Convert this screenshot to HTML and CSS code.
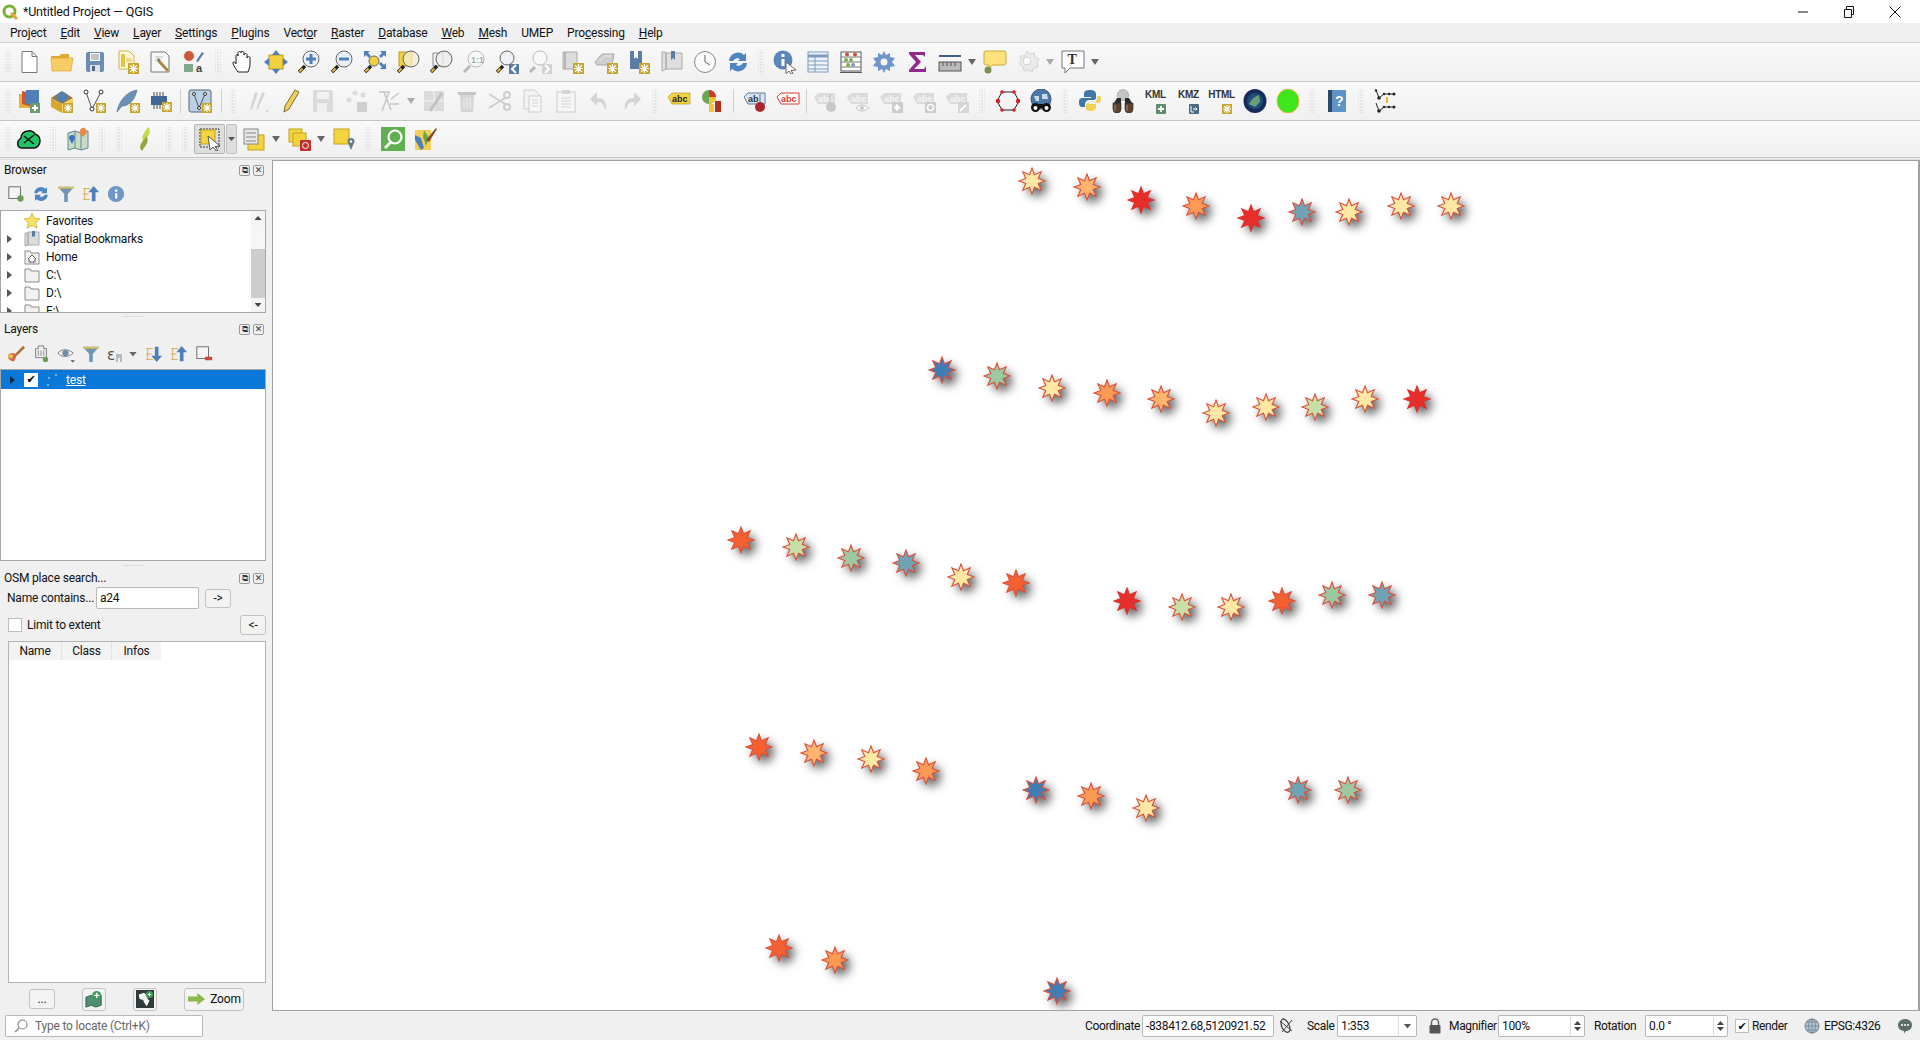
FILE: index.html
```html
<!DOCTYPE html>
<html lang="en">
<head>
    <meta charset="UTF-8">
    <title>*Untitled Project — QGIS</title>
    <link rel="stylesheet" href="styles.css">
</head>
<body>
    <svg class="defs">
        <defs>
            <symbol id="badge" viewBox="0 0 10 10"><rect width="10" height="10" fill="#c8a52e"/><path d="M5 1v8M1 5h8M2 2l6 6M8 2l-6 6" stroke="#fff" stroke-width="1.1"/></symbol>
            <symbol id="mag" viewBox="0 0 24 24"><path d="M2 22l6-6" stroke="#222" stroke-width="3.4"/><path d="M2.5 21.5l3-3" stroke="#e8c33c" stroke-width="1.8"/></symbol>
            <symbol id="fold" viewBox="0 0 16 16"><path d="M1 2h5l1 2h8v11H1z" fill="#f1f1f1" stroke="#8a8a8a"/></symbol>
            <symbol id="lab" viewBox="0 0 24 24"><path d="M1 8l4-4h17v11H5z" fill="#d9d9d9"/><text x="5" y="13" class="ict" font-size="9" font-weight="700" fill="#f5f5f5">abc</text></symbol>
            <polygon id="star" points="0,-13 2.5,-6.2 9.2,-9.2 6.2,-2.5 13,0 6.2,2.500 9.2,9.2 2.5,6.200 0,13 -2.5,6.200 -9.2,9.2 -6.2,2.500 -13,0 -6.2,-2.5 -9.2,-9.2 -2.5,-6.2"/>
        </defs>
    </svg>

    <div class="titlebar">
        <svg class="app-logo" viewBox="0 0 16 16"><circle cx="7.5" cy="7.5" r="5.5" fill="none" stroke="#7fae35" stroke-width="3"/><path d="M9 9l6 6" stroke="#e8a33a" stroke-width="3"/></svg>
        <span class="app-title">*Untitled Project — QGIS</span>
        <div class="winbtns">
            <svg class="winbtn" viewBox="0 0 12 12"><path d="M1 6h10" stroke="#111"/></svg>
            <svg class="winbtn" viewBox="0 0 12 12"><path d="M1.5 3.5h7v8h-7zM3.5 3.5v-3h7v8h-2" fill="none" stroke="#111"/></svg>
            <svg class="winbtn" viewBox="0 0 12 12"><path d="M.5.5l11 11M11.5.5l-11 11" stroke="#111"/></svg>
        </div>
    </div>

    <div class="menubar">
        <span>Pro<u>j</u>ect</span><span><u>E</u>dit</span><span><u>V</u>iew</span><span><u>L</u>ayer</span><span><u>S</u>ettings</span><span><u>P</u>lugins</span><span>Vect<u>o</u>r</span><span><u>R</u>aster</span><span><u>D</u>atabase</span><span><u>W</u>eb</span><span><u>M</u>esh</span><span>UMEP</span><span>Pro<u>c</u>essing</span><span><u>H</u>elp</span>
    </div>

    <div class="toolbar">
        <i class="grip"></i>
        <b class="btn"><svg class="ic" viewBox="0 0 24 24"><path d="M5 1.5h10l5 5v16H5z" fill="#fff" stroke="#777"/><path d="M15 1.5v5h5" fill="none" stroke="#777"/></svg></b>
        <b class="btn"><svg class="ic" viewBox="0 0 24 24"><path d="M1 6h8l2-2h8v4H1z" fill="#e0a92f"/><path d="M1 8h22l-2 13H2z" fill="#f6cd62" stroke="#dca838" stroke-width=".7"/></svg></b>
        <b class="btn"><svg class="ic" viewBox="0 0 24 24"><rect x="3" y="2" width="18" height="20" rx="2" fill="#6c8db3"/><path d="M7 3h10v8H7z" fill="#fff"/><path d="M8 5h8M8 7h8M8 9h8" stroke="#888"/><path d="M7 15h10v7H7z" fill="#e2e2e2"/><path d="M9 16h3v5H9z" fill="#50698a"/></svg></b>
        <b class="btn"><svg class="ic" viewBox="0 0 24 24"><path d="M3 1h10l5 5v13H3z" fill="#fff8d8" stroke="#d5b148"/><path d="M5 4h4v13H5z" fill="#e6c04a"/><path d="M10 8h6v4h-6z" fill="#f0d98a"/><use href="#badge" x="12" y="13" width="11" height="11"/></svg></b>
        <b class="btn"><svg class="ic" viewBox="0 0 24 24"><path d="M2 2h14l4 4v16H2z" fill="#f8f8f8" stroke="#777"/><path d="M6 7h8M6 10h6" stroke="#bbb"/><path d="M9 10l10 11" stroke="#a98b4a" stroke-width="3"/><path d="M8 8l3 1-1 3z" fill="#666"/></svg></b>
        <b class="btn"><svg class="ic" viewBox="0 0 24 24"><circle cx="7" cy="6" r="5" fill="#d0583a"/><rect x="2" y="14" width="9" height="8" fill="#80a88a"/><path d="M14 11l6-9 2 1-6 9z" fill="#5b7da5"/><text x="14" y="22" class="ict" font-size="11" fill="#444">a</text></svg></b>
        <i class="grip g16"></i>
        <b class="btn"><svg class="ic" viewBox="0 0 24 24"><path d="M7 22c-2-3-5-7-5-9s2-1 3 1V6c0-2 2-2 2 0V3c0-2 3-2 3 0v-1c0-1 3-1 3 1v2c0-2 3-2 3 0v3c0-2 3-2 3 0v6c0 3-1 5-2 8z" fill="#fff" stroke="#222"/></svg></b>
        <b class="btn"><svg class="ic" viewBox="0 0 24 24"><rect x="5" y="5" width="14" height="14" fill="#f3d03e" stroke="#b99a20"/><path d="M12 0l4 5H8zM12 24l-4-5h8zM0 12l5-4v8zM24 12l-5 4V8z" fill="#4f7fb8"/></svg></b>
        <b class="btn"><svg class="ic" viewBox="0 0 24 24"><circle cx="14" cy="9" r="8" fill="#eaf0f6" stroke="#666"/><path d="M14 4v10M9 9h10" stroke="#4f7fb8" stroke-width="3"/><use href="#mag" width="24" height="24"/></svg></b>
        <b class="btn"><svg class="ic" viewBox="0 0 24 24"><circle cx="14" cy="9" r="8" fill="#eaf0f6" stroke="#666"/><path d="M9 9h10" stroke="#4f7fb8" stroke-width="3"/><use href="#mag" width="24" height="24"/></svg></b>
        <b class="btn"><svg class="ic" viewBox="0 0 24 24"><path d="M1 1h22v18H1z" fill="#f0f4f8"/><path d="M1 1h6l-2 2 3 3-2 2-3-3-2 2zM23 1v6l-2-2-3 3-2-2 3-3-2-2zM23 19h-6l2-2-3-3 2-2 3 3 2-2z" fill="#4f7fb8"/><circle cx="11" cy="11" r="5" fill="#f3d03e" stroke="#666"/><use href="#mag" width="24" height="24"/></svg></b>
        <b class="btn"><svg class="ic" viewBox="0 0 24 24"><rect x="3" y="2" width="13" height="14" fill="#f3d03e" stroke="#b99a20"/><circle cx="15" cy="9" r="8" fill="#f3ecd2" fill-opacity=".8" stroke="#666"/><use href="#mag" width="24" height="24"/></svg></b>
        <b class="btn"><svg class="ic" viewBox="0 0 24 24"><path d="M4 3h10v13H4z" fill="#f3f3f3" stroke="#888"/><circle cx="15" cy="9" r="8" fill="#eee" fill-opacity=".8" stroke="#666"/><use href="#mag" width="24" height="24"/></svg></b>
        <b class="btn off"><svg class="ic" viewBox="0 0 24 24"><circle cx="14" cy="9" r="8" fill="#fafafa" stroke="#aaa"/><text x="9" y="13" class="ict" font-size="9" fill="#999">1:1</text><path d="M2 22l6-6" stroke="#aaa" stroke-width="3"/></svg></b>
        <b class="btn"><svg class="ic" viewBox="0 0 24 24"><circle cx="12" cy="8" r="7" fill="#eef2f6" stroke="#666"/><use href="#mag" width="24" height="24"/><path d="M14 14h10v10H14z" fill="#5b7da5"/><path d="M21 15l-4 4 4 4" fill="none" stroke="#fff" stroke-width="2"/></svg></b>
        <b class="btn off"><svg class="ic" viewBox="0 0 24 24"><circle cx="12" cy="8" r="7" fill="#fafafa" stroke="#aaa"/><path d="M2 22l5-5" stroke="#aaa" stroke-width="3"/><path d="M14 14h10v10H14z" fill="#ccc"/><path d="M17 15l4 4-4 4" fill="none" stroke="#fff" stroke-width="2"/></svg></b>
        <b class="btn"><svg class="ic" viewBox="0 0 24 24"><path d="M2 2h2v17H2zM4 2h12v17H4z" fill="#dcdcdc" stroke="#aaa"/><use href="#badge" x="12" y="13" width="11" height="11"/></svg></b>
        <b class="btn"><svg class="ic" viewBox="0 0 24 24"><path d="M1 12l7-8h12l-2 11H3z" fill="#cfcfcf" stroke="#aaa"/><path d="M6 11l5-5h6" fill="none" stroke="#eee"/><use href="#badge" x="13" y="13" width="11" height="11"/></svg></b>
        <b class="btn"><svg class="ic" viewBox="0 0 24 24"><path d="M3 1h12v18H3z" fill="#5b7da5"/><path d="M7 1h4v8l-2-2-2 2z" fill="#fff"/><use href="#badge" x="12" y="13" width="11" height="11"/></svg></b>
        <b class="btn"><svg class="ic" viewBox="0 0 24 24"><path d="M2 2h3l1 1v16l-4 2zM6 3h16v16H6z" fill="#dfdfdf" stroke="#aaa"/><path d="M11 1h4v9l-2-2-2 2z" fill="#5b7da5"/></svg></b>
        <b class="btn"><svg class="ic" viewBox="0 0 24 24"><circle cx="12" cy="12" r="10.5" fill="#fafafa" stroke="#888"/><path d="M12 5v7l5 3" fill="none" stroke="#666"/></svg></b>
        <b class="btn"><svg class="ic" viewBox="0 0 24 24"><path d="M3 11a9 9 0 0 1 15-6l2-2v8h-8l2-2a5 5 0 0 0-7 2z" fill="#4f86c0"/><path d="M21 13a9 9 0 0 1-15 6l-2 2v-8h8l-2 2a5 5 0 0 0 7-2z" fill="#4f86c0"/></svg></b>
        <i class="grip g14"></i>
        <b class="btn"><svg class="ic" viewBox="0 0 24 24"><circle cx="10" cy="10" r="9.500" fill="#5b86b5"/><rect x="8.500" y="9" width="3" height="7" fill="#fff"/><rect x="8.500" y="4" width="3" height="3" fill="#fff"/><path d="M13 12l10 8-5 .5 2 3-2 .5-2-3-3 2.500z" fill="#fff" stroke="#666"/></svg></b>
        <b class="btn"><svg class="ic" viewBox="0 0 24 24"><rect x="2" y="2" width="20" height="20" fill="#eef3f8" stroke="#7d9cc0"/><path d="M2 6h20" stroke="#7d9cc0" stroke-width="3"/><path d="M9 6v16M2 11h20M2 15h20M2 19h20" stroke="#7d9cc0"/></svg></b>
        <b class="btn"><svg class="ic" viewBox="0 0 24 24"><rect x="2" y="2" width="20" height="19" fill="#fff" stroke="#555"/><path d="M2 7h20M2 12h20M2 17h20" stroke="#777"/><circle cx="8" cy="4.5" r="2" fill="#c9503c"/><circle cx="16" cy="4.5" r="2" fill="#c9503c"/><circle cx="7" cy="10" r="2" fill="#7fae55"/><circle cx="12" cy="10" r="2" fill="#7fae55"/><circle cx="9" cy="15" r="2" fill="#7fae55"/><circle cx="14" cy="15" r="2" fill="#7d9cc0"/><path d="M1 22.500h22" stroke="#555"/></svg></b>
        <b class="btn"><svg class="ic" viewBox="0 0 24 24"><path d="M12 1l2 4 4-2 0 4 5 1-3 4 3 4-5 1 0 4-4-2-2 4-2-4-4 2 0-4-5-1 3-4-3-4 5-1 0-4 4 2z" fill="#6f96c8"/><circle cx="12" cy="12" r="3.500" fill="#f5f5f5"/></svg></b>
        <b class="btn"><svg class="ic" viewBox="0 0 24 24"><path d="M4 2h16v5l-2-2H10l6 7-7 7h10l2-3v6H4v-2l7-8-7-8z" fill="#92278f"/></svg></b>
        <b class="btn"><svg class="ic" viewBox="0 0 24 24"><path d="M1 6h22" stroke="#3f5f8a" stroke-width="2"/><rect x="1" y="12" width="22" height="9" fill="#b9b9b9" stroke="#555"/><path d="M5 12v4M9 12v4M13 12v4M17 12v4" stroke="#555"/></svg></b>
        <i class="arrow"></i>
        <b class="btn"><svg class="ic" viewBox="0 0 24 24"><path d="M3 1h18q2 0 2 2v10q0 2-2 2H10l-4 3V15H3q-2 0-2-2V3q0-2 2-2z" fill="#fbe27a" stroke="#caa93a"/><circle cx="5" cy="20" r="3.500" fill="#7c9150"/></svg></b>
        <b class="btn off"><svg class="ic" viewBox="0 0 24 24"><path d="M11 1l3 3 4-1 1 4 4 2-2 4 1 4-4 1-2 4-4-2-4 1-1-4-4-3 2-3-1-5 5 0z" fill="#e9e9e9" stroke="#ccc"/><circle cx="11" cy="11" r="4" fill="#fafafa" stroke="#ccc"/></svg></b>
        <i class="arrow off-a"></i>
        <b class="btn"><svg class="ic" viewBox="0 0 24 24"><path d="M1 1h22v17H9l-5 5v-5H1z" fill="#fdfdfd" stroke="#777"/><text x="6.500" y="14" class="ict-serif" font-size="14" fill="#333">T</text></svg></b>
        <i class="arrow"></i>
    </div>

    <div class="toolbar">
        <i class="grip"></i>
        <b class="btn"><svg class="ic" viewBox="0 0 24 24"><path d="M2 5h13v14H2z" fill="#e8b23a"/><path d="M5 2l10 2v14L5 15z" fill="#c9573a"/><rect x="9" y="1" width="13" height="14" fill="#4f7fb8"/><rect x="13" y="14" width="10" height="10" fill="#6f9a74"/><path d="M18 16v6M15 19h6" stroke="#fff" stroke-width="2"/></svg></b>
        <b class="btn"><svg class="ic" viewBox="0 0 24 24"><path d="M1 9l11-7 11 7-11 6z" fill="#8b7a4c"/><path d="M1 9v9l11 6V15z" fill="#d6a92e"/><path d="M23 9v9l-11 6V15z" fill="#f1cf62"/><circle cx="12" cy="8" r="5" fill="#4f7fb8"/><use href="#badge" x="13" y="14" width="10" height="10"/></svg></b>
        <b class="btn"><svg class="ic" viewBox="0 0 24 24"><path d="M3 3l6 17L18 3" fill="none" stroke="#555"/><circle cx="3" cy="3" r="2" fill="#fff" stroke="#333"/><circle cx="18" cy="3" r="2" fill="#fff" stroke="#333"/><circle cx="9" cy="20" r="2" fill="#fff" stroke="#333"/><use href="#badge" x="13" y="14" width="10" height="10"/></svg></b>
        <b class="btn"><svg class="ic" viewBox="0 0 24 24"><path d="M1 23C3 12 10 3 21 1c-2 10-8 16-15 16z" fill="#6c8fb5" stroke="#47688c" stroke-width=".6"/><use href="#badge" x="14" y="14" width="10" height="10"/></svg></b>
        <b class="btn"><svg class="ic" viewBox="0 0 24 24"><rect x="2" y="7" width="16" height="9" fill="#3f6796"/><path d="M5 3v4M8 3v4M11 3v4M14 3v4M5 16v4M8 16v4M11 16v4" stroke="#444"/><use href="#badge" x="13" y="13" width="10" height="10"/></svg></b>
        <i class="sep s6"></i>
        <b class="btn"><svg class="ic" viewBox="0 0 24 24"><rect x="1" y="1" width="22" height="22" rx="2" fill="#bcd0e4" stroke="#567"/><path d="M6 5l5 14 6-14" fill="none" stroke="#456"/><circle cx="6" cy="5" r="1.500" fill="#fff" stroke="#333"/><circle cx="17" cy="5" r="1.500" fill="#fff" stroke="#333"/><circle cx="11" cy="19" r="1.500" fill="#fff" stroke="#333"/><use href="#badge" x="14" y="14" width="10" height="10"/></svg></b>
        <i class="sep s10"></i>
        <i class="grip g14"></i>
        <b class="btn off"><svg class="ic" viewBox="0 0 24 24"><path d="M5 20L10 3l3 1-6 17zM11 20l6-17 3 1-7 16z" fill="#cfcfcf"/><path d="M21 22h2" stroke="#999"/></svg></b>
        <b class="btn"><svg class="ic" viewBox="0 0 24 24"><path d="M6 23l1-6L17 1l4 2-10 17z" fill="#f0cf5c" stroke="#7c6a2a"/></svg></b>
        <b class="btn off"><svg class="ic" viewBox="0 0 24 24"><rect x="2" y="1" width="20" height="22" rx="2" fill="#d5d5d5"/><path d="M6 3h12v7H6z" fill="#f2f2f2"/><path d="M6 14h10v9H6z" fill="#efefef"/></svg></b>
        <b class="btn off"><svg class="ic" viewBox="0 0 24 24"><circle cx="5" cy="11" r="2.500" fill="#d6d6d6"/><circle cx="11" cy="4" r="2.500" fill="#d6d6d6"/><circle cx="19" cy="6" r="2.500" fill="#d6d6d6"/><rect x="13" y="13" width="10" height="10" fill="#c8c8c8"/></svg></b>
        <b class="btn off"><svg class="ic" viewBox="0 0 24 24"><path d="M2 3h10L5 22M7 3l7 18M14 10l8-6M13 15h9" fill="none" stroke="#bbb" stroke-width="1.500"/></svg></b>
        <i class="arrow off-a"></i>
        <b class="btn off"><svg class="ic" viewBox="0 0 24 24"><rect x="2" y="2" width="20" height="20" fill="#d5d5d5"/><path d="M2 12h20M12 2v20" stroke="#f4f4f4"/><path d="M8 22L20 4" stroke="#b5b5b5" stroke-width="3"/></svg></b>
        <b class="btn off"><svg class="ic" viewBox="0 0 24 24"><path d="M5 6h14l-1 17H6z" fill="#cfcfcf"/><path d="M3 3h18v3H3z" fill="#bbb"/><path d="M9 9v11M12 9v11M15 9v11" stroke="#eee"/></svg></b>
        <b class="btn off"><svg class="ic" viewBox="0 0 24 24"><circle cx="19" cy="6" r="3" fill="none" stroke="#c4c4c4" stroke-width="2"/><circle cx="19" cy="18" r="3" fill="none" stroke="#c4c4c4" stroke-width="2"/><path d="M1 5l16 10M1 19L17 9" stroke="#c4c4c4" stroke-width="2"/></svg></b>
        <b class="btn off"><svg class="ic" viewBox="0 0 24 24"><path d="M3 1h11l4 4v15H3z" fill="#f2f2f2" stroke="#c4c4c4"/><path d="M8 7h12v16H8z" fill="#f7f7f7" stroke="#c4c4c4"/><path d="M11 11h6M11 14h6M11 17h6" stroke="#ccc"/></svg></b>
        <b class="btn off"><svg class="ic" viewBox="0 0 24 24"><rect x="3" y="3" width="18" height="20" fill="#f7f7f7" stroke="#c4c4c4"/><rect x="8" y="1" width="8" height="4" fill="#ccc"/><path d="M7 9h10M7 12h10M7 15h10M7 18h10" stroke="#ccc"/></svg></b>
        <b class="btn off"><svg class="ic" viewBox="0 0 24 24"><path d="M10 3L3 10l7 7v-4c4 0 6 1 7 5l2 3c1-8-2-12-9-12z" fill="#cdcdcd"/></svg></b>
        <b class="btn off"><svg class="ic" viewBox="0 0 24 24"><path d="M14 3l7 7-7 7v-4c-4 0-6 1-7 5l-2 3c-1-8 2-12 9-12z" fill="#cdcdcd"/></svg></b>
        <i class="grip g14"></i>
        <b class="btn"><svg class="ic" viewBox="0 0 24 24"><path d="M1 8l4-4h18v11H5z" fill="#f4d43e" stroke="#a98f1f" stroke-width=".6"/><text x="5" y="13" class="ict" font-size="9" font-weight="700" fill="#222">abc</text></svg></b>
        <b class="btn"><svg class="ic" viewBox="0 0 24 24"><circle cx="9" cy="8" r="7" fill="#6aa84f"/><path d="M9 8V1a7 7 0 0 1 7 7z" fill="#d9352e"/><path d="M9 8h7a7 7 0 0 1-7 7z" fill="#f2c53d"/><rect x="9" y="15" width="5" height="8" fill="#f2c53d"/><rect x="15" y="12" width="6" height="11" fill="#b03020"/></svg></b>
        <i class="sep s10"></i>
        <b class="btn"><svg class="ic" viewBox="0 0 24 24"><path d="M1 8l4-4h17v11H5z" fill="#dbe6f2" stroke="#5b7da5"/><text x="5" y="13" class="ict" font-size="9" font-weight="700" fill="#234">ab</text><path d="M17 5v10" stroke="#666"/><circle cx="17" cy="18" r="5" fill="#a8262c"/></svg></b>
        <b class="btn"><svg class="ic" viewBox="0 0 24 24"><path d="M1 8l4-4h18v11H5z" fill="#fff" stroke="#d63a3a"/><text x="5" y="13" class="ict" font-size="9" font-weight="700" fill="#d63a3a">abc</text></svg></b>
        <i class="sep s4"></i>
        <b class="btn off2"><svg class="ic" viewBox="0 0 24 24"><use href="#lab" width="24" height="24"/><path d="M17 5v10" stroke="#bbb"/><circle cx="18" cy="18" r="5" fill="#c4c4c4"/></svg></b>
        <b class="btn off2"><svg class="ic" viewBox="0 0 24 24"><use href="#lab" width="24" height="24"/><path d="M10 19c3-4 9-4 13 0-4 4-10 4-13 0z" fill="#f4f4f4" stroke="#c4c4c4"/><circle cx="16" cy="19" r="2" fill="#c4c4c4"/></svg></b>
        <b class="btn off2"><svg class="ic" viewBox="0 0 24 24"><use href="#lab" width="24" height="24"/><rect x="13" y="13" width="11" height="11" fill="#c8c8c8"/><path d="M15 18.500h4M17 15.500l3 3-3 3" fill="none" stroke="#fff" stroke-width="2"/></svg></b>
        <b class="btn off2"><svg class="ic" viewBox="0 0 24 24"><use href="#lab" width="24" height="24"/><rect x="13" y="13" width="11" height="11" fill="#c8c8c8"/><circle cx="18.500" cy="18.500" r="3" fill="none" stroke="#fff" stroke-width="1.500"/></svg></b>
        <b class="btn off2"><svg class="ic" viewBox="0 0 24 24"><use href="#lab" width="24" height="24"/><rect x="13" y="13" width="11" height="11" fill="#d2d2d2"/><path d="M15 22l6-6" stroke="#fff" stroke-width="2"/></svg></b>
        <i class="grip g18"></i>
        <b class="btn"><svg class="ic" viewBox="0 0 24 24"><path d="M6 3h12l5 9-5 9H6l-5-9z" fill="none" stroke="#222"/><circle cx="6" cy="3" r="1.800" fill="#d81e2c"/><circle cx="18" cy="3" r="1.800" fill="#d81e2c"/><circle cx="22" cy="12" r="2.200" fill="#d81e2c"/><circle cx="18" cy="21" r="1.800" fill="#d81e2c"/><circle cx="6" cy="21" r="1.800" fill="#d81e2c"/><circle cx="2" cy="12" r="2.200" fill="#d81e2c"/></svg></b>
        <b class="btn"><svg class="ic" viewBox="0 0 24 24"><circle cx="12" cy="10" r="10" fill="#4a78a8" stroke="#33577f"/><path d="M5 7h5v5H7zM13 5h5l1 5h-6z" fill="#cddbe8"/><circle cx="6.500" cy="18.500" r="4.500" fill="#111"/><circle cx="17.500" cy="18.500" r="4.500" fill="#111"/><path d="M9 15h6v4H9z" fill="#111"/><circle cx="6.500" cy="19" r="2" fill="#fff"/><circle cx="17.500" cy="19" r="2" fill="#fff"/></svg></b>
        <i class="grip g16"></i>
        <b class="btn"><svg class="ic" viewBox="0 0 24 24"><path d="M12 1C7 1 6 3 6 5v3h7v1H4c-3 0-3 3-3 5s1 4 3 4h3v-3c0-2 2-4 4-4h5c1 0 2-1 2-2V5c0-2-2-4-6-4z" fill="#3f78a8"/><path d="M12 22c5 0 6-2 6-4v-3h-7v-1h9c2 0 3-2 3-4 0-1 0-2-1-3h-3v3c0 2-2 4-4 4H10c-1 0-2 1-2 2v3c0 2 1 3 4 3z" fill="#f2cf55"/></svg></b>
        <b class="btn"><svg class="ic" viewBox="0 0 24 24"><circle cx="12" cy="6" r="5.500" fill="#c4c4c4" stroke="#999" stroke-dasharray="2 1"/><path d="M6 9h4v5H3zM14 9h4l3 5h-7z" fill="#2b2b2b"/><path d="M2 14h8v6a4 4 0 0 1-8 0zM14 14h8v6a4 4 0 0 1-8 0z" fill="#5c4030" stroke="#1e1e1e" stroke-width=".6"/><path d="M4 16v6M16 16v6" stroke="#a88a6a"/></svg></b>
        <b class="btn"><span class="kml"><span>KML</span><svg viewBox="0 0 10 10"><rect width="10" height="10" rx="1" fill="#5f8c6a"/><path d="M5 2v6M2 5h6" stroke="#fff" stroke-width="1.800"/></svg></span></b>
        <b class="btn"><span class="kml"><span>KMZ</span><svg viewBox="0 0 10 10"><rect width="10" height="10" rx="1" fill="#4c6a82"/><path d="M2 2v6h3M4 5h4M6.500 3.500L8 5 6.500 6.500" fill="none" stroke="#fff"/></svg></span></b>
        <b class="btn"><span class="kml"><span>HTML</span><svg viewBox="0 0 10 10"><use href="#badge" width="10" height="10"/></svg></span></b>
        <b class="btn"><svg class="ic" viewBox="0 0 24 24"><ellipse cx="12" cy="12" rx="11.500" ry="12" fill="#172a58"/><circle cx="12" cy="12" r="8" fill="#1e4d7c"/><path d="M6 15c3-6 7-8 10-9l1 7-5 5z" fill="#68a07a"/></svg></b>
        <b class="btn"><svg class="ic" viewBox="0 0 24 24"><ellipse cx="12" cy="12" rx="11" ry="12" fill="#3fe61c" stroke="#eab83a"/></svg></b>
        <i class="grip g16"></i>
        <b class="btn"><svg class="ic" viewBox="0 0 24 24"><path d="M3 1h18v22H3z" fill="#5f93c8"/><path d="M3 1h4v22H3z" fill="#2d4a68"/><text x="10" y="17" class="ict" font-size="14" fill="#fff">?</text></svg></b>
        <i class="grip g16"></i>
        <b class="btn"><svg class="ic" viewBox="0 0 24 24"><path d="M2 1l3 8 5-4h10" fill="none" stroke="#222"/><path d="M2 14l3 8 5-4h10" fill="none" stroke="#222"/><circle cx="2" cy="1.500" r="1.200" fill="#222"/><circle cx="5" cy="9" r="1.800" fill="#222"/><circle cx="10" cy="5" r="1.200" fill="#222"/><circle cx="15" cy="5" r="1.200" fill="#222"/><circle cx="20" cy="5" r="1.500" fill="#222"/><circle cx="5" cy="22" r="1.800" fill="#222"/><circle cx="10" cy="18" r="1.200" fill="#222"/><circle cx="15" cy="18" r="1.200" fill="#222"/><circle cx="20" cy="18" r="1.500" fill="#222"/><path d="M13 8v6" stroke="#eab83a" stroke-width="2"/></svg></b>
    </div>

    <div class="toolbar last">
        <i class="grip"></i>
        <b class="btn"><svg class="ic" viewBox="0 0 24 24"><path d="M5 21c-3 0-5-2-4-6 0-2 2-3 3-4 0-4 3-7 7-7 3-1 6 1 7 3 3 1 5 4 5 7 0 4-3 7-6 7z" fill="#23c468" stroke="#111" stroke-width="1.500"/><path d="M7 16l10-8M7 9l10 8" stroke="#111" stroke-width="1.500"/></svg></b>
        <i class="grip g16"></i>
        <b class="btn"><svg class="ic" viewBox="0 0 24 24"><path d="M2 6l7-2 6 2 7-2v17l-7 2-6-2-7 2z" fill="#c7dcc4" stroke="#5f8a92"/><path d="M9 4v17M15 6v17" stroke="#5f8a92"/><path d="M16 1c3-1 6 2 4 6l-3 3-3-3c-1-3 0-5 2-6z" fill="#e88a4a"/><path d="M6 8a3 3 0 0 1 3 3l-3 6-3-6a3 3 0 0 1 3-3z" fill="#3a6ec8"/></svg></b>
        <i class="grip g16"></i>
        <i class="grip g18"></i>
        <b class="btn"><svg class="ic" viewBox="0 0 24 24"><path d="M15 0c3 3 2 6 0 9l-5 6c-1-4-1-6 1-9z" fill="#c3d84a"/><path d="M9 24c-3-3-2-6 0-9l5-6c1 4 1 6-1 9z" fill="#8fa93a"/></svg></b>
        <i class="grip g16"></i>
        <i class="grip g16"></i>
        <span class="selbtn"><svg class="ic" viewBox="0 0 24 24"><rect x="2" y="2" width="19" height="18" fill="none" stroke="#333" stroke-dasharray="2 1"/><rect x="3" y="3" width="14" height="14" fill="#f4d43e" stroke="#c2a41f"/><path d="M10 9l12 10-5 .5 3 4-2 .5-3-4-3 3z" fill="#fff" stroke="#555"/></svg></span>
        <span class="selarrow"><i class="arrow-tri"></i></span>
        <b class="btn"><svg class="ic" viewBox="0 0 24 24"><rect x="6" y="8" width="16" height="15" fill="#f4d43e" stroke="#c2a41f"/><rect x="2" y="2" width="14" height="15" fill="#e8e8e8" stroke="#888"/><path d="M4 6h10M4 10h10M4 14h10" stroke="#888"/></svg></b>
        <i class="arrow"></i>
        <b class="btn"><svg class="ic" viewBox="0 0 24 24"><rect x="2" y="2" width="13" height="13" fill="#f4d43e" stroke="#c2a41f"/><rect x="6" y="6" width="13" height="13" fill="#f4d43e" stroke="#c2a41f"/><rect x="13" y="13" width="11" height="11" rx="1" fill="#c0302c"/><circle cx="18.500" cy="18.500" r="3" fill="none" stroke="#fff"/></svg></b>
        <i class="arrow"></i>
        <b class="btn"><svg class="ic" viewBox="0 0 24 24"><rect x="2" y="2" width="15" height="15" fill="#f4d43e" stroke="#c2a41f"/><path d="M19 11a3.500 3.500 0 0 1 3.500 3.500L19 23l-3.500-8.500A3.500 3.500 0 0 1 19 11z" fill="#5f7a8c"/><circle cx="19" cy="14.500" r="1.200" fill="#fff"/></svg></b>
        <i class="grip g16"></i>
        <b class="btn"><svg class="ic" viewBox="0 0 24 24"><rect width="24" height="24" fill="#5fb04e"/><circle cx="14" cy="10" r="6.500" fill="none" stroke="#fff" stroke-width="2.200"/><path d="M4 21l6-6" stroke="#fff" stroke-width="2.600"/></svg></b>
        <b class="btn"><svg class="ic" viewBox="0 0 24 24"><path d="M1 3h16v20H1z" fill="#f3cf55"/><path d="M1 8l6 3 3 10-3 2-6-10z" fill="#4f7fb8"/><path d="M10 3l5 8-3 8-3-9z" fill="#6aa84f"/><path d="M12 13L22 1l1 1-8 13z" fill="#8a4a26"/></svg></b>
    </div>

    <div class="main">
        <div class="dock">
            <section class="panel browser">
                <div class="panel-head"><span>Browser</span><span class="panel-btns"><i class="pbtn">&#x29C9;</i><i class="pbtn">&#x2715;</i></span></div>
                <div class="panel-tools">
                    <svg class="pic" viewBox="0 0 20 20"><rect x="2" y="2" width="13" height="13" fill="#f5f5f5" stroke="#666"/><circle cx="15" cy="15" r="3.500" fill="#6f9a5a"/></svg>
                    <svg class="pic" viewBox="0 0 24 24"><path d="M3 11a9 9 0 0 1 15-6l2-2v8h-8l2-2a5 5 0 0 0-7 2z" fill="#4f86c0"/><path d="M21 13a9 9 0 0 1-15 6l-2 2v-8h8l-2 2a5 5 0 0 0 7-2z" fill="#4f86c0"/></svg>
                    <svg class="pic" viewBox="0 0 20 20"><path d="M1 2h18l-7 8v9H8v-9z" fill="#6f96b5"/><path d="M1 2h18v2H1z" fill="#d8c25a"/></svg>
                    <svg class="pic" viewBox="0 0 20 20"><path d="M1 4h8M1 10h6M1 16h8M3 4v12" stroke="#d8a94a"/><path d="M13 1l6 7h-4v10h-4V8H7z" fill="#4f7fb8"/></svg>
                    <svg class="pic" viewBox="0 0 20 20"><circle cx="10" cy="10" r="9" fill="#6f96c8"/><rect x="9" y="9" width="2.500" height="6" fill="#fff"/><rect x="9" y="5" width="2.500" height="2.500" fill="#fff"/></svg>
                </div>
                <div class="tree browser-tree">
                    <div class="tree-rows">
                        <div class="tree-row"><i class="twig none"></i><svg class="tic" viewBox="0 0 16 16"><path d="M8 0l2.400 5.200 5.600.600-4.200 3.800 1.200 5.600L8 12.400 3 15.200l1.200-5.600L0 5.800l5.600-.6z" fill="#f7e264" stroke="#c8a928" stroke-width=".7"/></svg>Favorites</div>
                        <div class="tree-row"><i class="twig"></i><svg class="tic" viewBox="0 0 16 16"><path d="M1 2h3v12l-3 1zM4 1h11v13H4z" fill="#dcdcdc" stroke="#aaa"/><path d="M8 0h3v6L9.500 5 8 6z" fill="#5b7da5"/></svg>Spatial Bookmarks</div>
                        <div class="tree-row"><i class="twig"></i><svg class="tic" viewBox="0 0 16 16"><use href="#fold" width="16" height="16"/><path d="M4 10l4-4 4 4M5 10v3h6v-3" fill="#fff" stroke="#333" stroke-width=".8"/></svg>Home</div>
                        <div class="tree-row"><i class="twig"></i><svg class="tic" viewBox="0 0 16 16"><use href="#fold" width="16" height="16"/></svg>C:\</div>
                        <div class="tree-row"><i class="twig"></i><svg class="tic" viewBox="0 0 16 16"><use href="#fold" width="16" height="16"/></svg>D:\</div>
                        <div class="tree-row"><i class="twig"></i><svg class="tic" viewBox="0 0 16 16"><use href="#fold" width="16" height="16"/></svg>E:\</div>
                    </div>
                    <div class="scrollbar">
                        <span class="sb-btn"><i class="tri-up"></i></span>
                        <span class="sb-top"></span>
                        <span class="sb-thumb"></span>
                        <span class="sb-btn"><i class="tri-down"></i></span>
                    </div>
                </div>
            </section>
            <div class="splitter"></div>
            <section class="panel layers">
                <div class="panel-head"><span>Layers</span><span class="panel-btns"><i class="pbtn">&#x29C9;</i><i class="pbtn">&#x2715;</i></span></div>
                <div class="panel-tools">
                    <svg class="pic" viewBox="0 0 20 20"><path d="M1 11c3-3 7-3 10 0l-3 7c-4 0-7-2-7-7z" fill="#d9634a"/><path d="M1 11c2-1 4-1 6 0l-1 4-4-1z" fill="#e8c84a"/><path d="M10 11l9-9" stroke="#a8743a" stroke-width="3"/></svg>
                    <svg class="pic" viewBox="0 0 20 20"><path d="M7 1h6v3h3v10H4V4h3z" fill="#eee" stroke="#777"/><path d="M7 6v6M10 6v6M13 6v6" stroke="#888"/><circle cx="15" cy="16" r="3" fill="#6f9a5a"/></svg>
                    <svg class="pic" viewBox="0 0 20 20"><path d="M1 9c4-5 12-5 17 0-5 5-13 5-17 0z" fill="#f2f2f2" stroke="#777"/><circle cx="9.500" cy="9" r="3.500" fill="#6f8ca8"/><path d="M15 17h5l-2.500 2.500z" fill="#555"/></svg>
                    <svg class="pic" viewBox="0 0 20 20"><path d="M1 2h18l-7 8v9H8v-9z" fill="#6f96b5"/><path d="M1 2h18v2H1z" fill="#d8c25a"/></svg>
                    <span class="eps">ε<svg class="eps-ic" viewBox="0 0 8 10"><path d="M1 1h6v8H5V5H3v4H1z" fill="#bbb"/></svg></span>
                    <i class="arrow small"></i>
                    <svg class="pic" viewBox="0 0 20 20"><path d="M1 4h8M1 10h6M1 16h8M3 4v12" stroke="#d8a94a"/><path d="M13 19l6-7h-4V2h-4v10H7z" fill="#4f7fb8"/></svg>
                    <svg class="pic" viewBox="0 0 20 20"><path d="M1 4h8M1 10h6M1 16h8M3 4v12" stroke="#d8a94a"/><path d="M13 1l6 7h-4v10h-4V8H7z" fill="#4f7fb8"/></svg>
                    <svg class="pic" viewBox="0 0 20 20"><rect x="2" y="2" width="13" height="13" fill="#f5f5f5" stroke="#666"/><rect x="11" y="13" width="8" height="4" rx="1" fill="#d0463f"/></svg>
                </div>
                <div class="tree layer-tree">
                    <div class="layer-row">
                        <i class="twig dark"></i>
                        <span class="layer-check">✔</span>
                        <svg class="layer-sym" viewBox="0 0 16 16"><circle cx="5" cy="6" r=".8" fill="#fff"/><circle cx="12" cy="3" r=".8" fill="#fff"/><circle cx="4" cy="13" r=".8" fill="#fff"/></svg>
                        <span class="layer-name">test</span>
                    </div>
                </div>
            </section>
            <div class="splitter"></div>
            <section class="panel osm">
                <div class="panel-head"><span>OSM place search...</span><span class="panel-btns"><i class="pbtn">&#x29C9;</i><i class="pbtn">&#x2715;</i></span></div>
                <div class="osm-form">
                    <div class="osm-line">
                        <label class="osm-label">Name contains...</label>
                        <span class="field osm-input">a24</span>
                        <span class="pushbtn go">-&gt;</span>
                    </div>
                    <div class="osm-line extent">
                        <span class="check"></span>
                        <span class="extent-label">Limit to extent</span>
                        <span class="pushbtn back">&lt;-</span>
                    </div>
                </div>
                <div class="result-table">
                    <div class="table-head"><span class="th th-name">Name</span><span class="th th-class">Class</span><span class="th th-infos">Infos</span></div>
                </div>
                <div class="osm-actions">
                    <span class="pushbtn dots">...</span>
                    <span class="pushbtn iconbtn"><svg class="pic" viewBox="0 0 20 20"><path d="M1 8l6-2 5 2 6-2v11l-6 2-5-2-6 2z" fill="#4d8f6f" stroke="#2f5f4a"/><circle cx="13" cy="6" r="5" fill="#3f9a58"/><path d="M13 3v6M10 6h6" stroke="#fff" stroke-width="1.600"/></svg></span>
                    <span class="pushbtn iconbtn"><svg class="pic" viewBox="0 0 20 20"><rect width="20" height="20" fill="#2f3a3a"/><path d="M3 5l6-2 3 3 1 4 2 2-3 6-3-4-1-3-4-1z" fill="#f5f5f5"/><circle cx="15" cy="5" r="4" fill="#3f9a58"/><path d="M15 3v4M13 5h4" stroke="#fff"/></svg></span>
                    <span class="pushbtn zoombtn"><svg class="zoom-ar" viewBox="0 0 20 14"><path d="M0 4h11V0l9 7-9 7v-4H0z" fill="#8cb94a"/></svg>Zoom</span>
                </div>
            </section>
        </div>

        <div class="canvas">
            <svg class="map" viewBox="272 160 1648 851">
                <g class="stars">
                    <use href="#star" x="1032" y="181" class="c-pale"/><use href="#star" x="1087" y="187" class="c-lorange"/><use href="#star" x="1141" y="200" class="c-red"/><use href="#star" x="1196" y="206" class="c-orange"/><use href="#star" x="1251" y="218" class="c-red"/><use href="#star" x="1302" y="212" class="c-teal"/><use href="#star" x="1349" y="212" class="c-pale"/><use href="#star" x="1401" y="206" class="c-pale"/><use href="#star" x="1451" y="206" class="c-pale"/>
                    <use href="#star" x="942" y="370" class="c-blue"/><use href="#star" x="997" y="376" class="c-green"/><use href="#star" x="1052" y="388" class="c-pale"/><use href="#star" x="1107" y="393" class="c-orange"/><use href="#star" x="1161" y="399" class="c-lorange"/><use href="#star" x="1216" y="413" class="c-pale"/><use href="#star" x="1266" y="407" class="c-pale"/><use href="#star" x="1315" y="407" class="c-lgreen"/><use href="#star" x="1365" y="399" class="c-pale"/><use href="#star" x="1417" y="399" class="c-red"/>
                    <use href="#star" x="741" y="540" class="c-rorange"/><use href="#star" x="796" y="547" class="c-lgreen"/><use href="#star" x="851" y="558" class="c-green"/><use href="#star" x="906" y="563" class="c-teal"/><use href="#star" x="961" y="577" class="c-pale"/><use href="#star" x="1016" y="583" class="c-rorange"/><use href="#star" x="1127" y="601" class="c-red"/><use href="#star" x="1182" y="607" class="c-lgreen"/><use href="#star" x="1231" y="607" class="c-pale"/><use href="#star" x="1282" y="601" class="c-rorange"/><use href="#star" x="1332" y="595" class="c-green"/><use href="#star" x="1382" y="595" class="c-teal"/>
                    <use href="#star" x="759" y="747" class="c-rorange"/><use href="#star" x="814" y="753" class="c-lorange"/><use href="#star" x="871" y="759" class="c-pale"/><use href="#star" x="926" y="771" class="c-orange"/><use href="#star" x="1036" y="790" class="c-blue"/><use href="#star" x="1091" y="796" class="c-orange"/><use href="#star" x="1146" y="808" class="c-pale"/><use href="#star" x="1298" y="790" class="c-teal"/><use href="#star" x="1348" y="790" class="c-green"/>
                    <use href="#star" x="779" y="948" class="c-rorange"/><use href="#star" x="835" y="960" class="c-orange"/><use href="#star" x="1057" y="991" class="c-blue"/>
                </g>
            </svg>
        </div>
    </div>

    <div class="statusbar">
        <div class="locator">
            <svg class="loc-ic" viewBox="0 0 14 14"><circle cx="8.500" cy="5.500" r="4.500" fill="none" stroke="#888" stroke-width="1.200"/><path d="M5 9l-4 4" stroke="#888" stroke-width="1.500"/></svg>
            <span>Type to locate (Ctrl+K)</span>
        </div>
        <div class="status-right">
            <span class="st-label st-coordl">Coordinate</span>
            <span class="field st-coord">-838412.68,5120921.52</span>
            <svg class="st-ic st-mouse" viewBox="0 0 16 16"><path d="M5 1c3 0 6 4 7 9 1 3-2 5-4 4-3-1-5-6-5-9 0-2 1-4 2-4z" fill="none" stroke="#444" stroke-width="1.300"/><path d="M2 3l12 10M14 2L4 14" stroke="#444"/></svg>
            <span class="st-label st-scale">Scale</span>
            <span class="field st-combo">1:353<i class="combo-arrow"><i class="arrow-tri"></i></i></span>
            <svg class="st-ic st-lock" viewBox="0 0 14 16"><path d="M3.500 7V4.500a3.500 3.500 0 0 1 7 0V7" fill="none" stroke="#666" stroke-width="1.500"/><rect x="1.500" y="7" width="11" height="8.500" rx="1" fill="#555"/></svg>
            <span class="st-label st-mag">Magnifier</span>
            <span class="field st-spin st-magv">100%<i class="spin"><i class="tri-up"></i><i class="tri-down"></i></i></span>
            <span class="st-label st-rot">Rotation</span>
            <span class="field st-spin st-rotv">0.0 °<i class="spin"><i class="tri-up"></i><i class="tri-down"></i></i></span>
            <span class="check st-check">✔</span>
            <span class="st-label st-render">Render</span>
            <svg class="st-ic st-globe" viewBox="0 0 16 16"><circle cx="8" cy="8" r="7" fill="#b4c2ce" stroke="#6b7f8f"/><path d="M1 8h14M8 1v14M3 4h10M3 12h10" stroke="#6b7f8f" stroke-width=".7"/><ellipse cx="8" cy="8" rx="3.500" ry="7" fill="none" stroke="#6b7f8f" stroke-width=".7"/></svg>
            <span class="st-label st-epsg">EPSG:4326</span>
            <svg class="st-ic st-msg" viewBox="0 0 16 16"><path d="M8 1c4 0 7 2.500 7 6s-3 6-6 6l-2 2.500V13C3 12.500 1 10 1 7s3-6 7-6z" fill="#5d6d69"/><circle cx="5" cy="7" r="1" fill="#fff"/><circle cx="8" cy="7" r="1" fill="#fff"/><circle cx="11" cy="7" r="1" fill="#fff"/></svg>
        </div>
    </div>
</body>
</html>
```

FILE: styles.css
```css
* {
    box-sizing: border-box;
}

html, body {
    margin: 0;
    height: 100%;
}

body {
    display: flex;
    flex-direction: column;
    width: 1920px;
    height: 1040px;
    overflow: hidden;
    font-family: Roboto, "Noto Sans", sans-serif;
    font-size: 12px;
    letter-spacing: -0.2px;
    color: #111;
    background: #f0f0f0;
}

.defs {
    display: block;
    width: 0;
    height: 0;
}

.ict {
    font-family: "Liberation Sans", sans-serif;
    letter-spacing: 0;
}

.ict-serif {
    font-family: "Liberation Serif", serif;
    letter-spacing: 0;
}

/* title + menu */
.titlebar {
    display: flex;
    flex: none;
    align-items: center;
    height: 23px;
    padding-left: 2px;
    background: #fff;
}

.app-logo {
    width: 16px;
    height: 16px;
    margin-right: 5px;
}

.app-title {
    font-size: 12.5px;
}

.winbtns {
    display: flex;
    margin-left: auto;
    margin-right: 19px;
    gap: 34px;
}

.winbtn {
    width: 12px;
    height: 12px;
}

.menubar {
    display: flex;
    flex: none;
    align-items: center;
    gap: 14px;
    height: 20px;
    padding-left: 10px;
    background: #f0f0f0;
    border-bottom: 1px solid #d2d2d2;
}

/* toolbars */
.toolbar {
    display: flex;
    flex: none;
    align-items: center;
    height: 39px;
    padding-left: 3px;
    background: linear-gradient(#f9f9f9, #f0f0f0);
    border-bottom: 1px solid #c4c4c4;
}

.toolbar.last {
    height: 37px;
}

.btn {
    display: flex;
    align-items: center;
    justify-content: center;
    flex: none;
    width: 33px;
    height: 30px;
}

.ic {
    display: block;
    width: 24px;
    height: 24px;
}

.off .ic {
    opacity: .8;
}

.off2 .ic {
    opacity: .9;
}

.grip {
    flex: none;
    width: 9px;
    height: 24px;
    padding: 0 1.5px;
    background: radial-gradient(circle, #b4b4b4 .7px, transparent 1px) center / 3px 3px repeat;
    background-clip: content-box;
}

.g14 { width: 14px; padding: 0 4px; }
.g16 { width: 16px; padding: 0 5px; }
.g18 { width: 18px; padding: 0 6px; }

.sep {
    flex: none;
    height: 24px;
    background: linear-gradient(#d0d0d0, #d0d0d0) center / 1px 100% no-repeat;
}

.s4 { width: 4px; }
.s6 { width: 6px; }
.s10 { width: 10px; }

.arrow {
    flex: none;
    width: 12px;
    height: 6px;
    background: #666;
    clip-path: polygon(2px 0, 10px 0, 6px 100%);
}

.off-a {
    background: #aaa;
}

.arrow.small {
    width: 10px;
    height: 5px;
    margin-left: -4px;
    clip-path: polygon(1px 0, 9px 0, 5px 100%);
}

.arrow-tri {
    display: block;
    width: 8px;
    height: 5px;
    background: #555;
    clip-path: polygon(0 0, 100% 0, 50% 100%);
}

.selbtn {
    display: flex;
    align-items: center;
    justify-content: center;
    flex: none;
    width: 31px;
    height: 30px;
    margin-left: 1px;
    background: #dedede;
    border: 1px solid #b5b5b5;
    border-radius: 2px;
}

.selarrow {
    display: flex;
    align-items: center;
    justify-content: center;
    flex: none;
    width: 11px;
    height: 30px;
    margin-left: 1px;
    background: #dedede;
    border: 1px solid #c0c0c0;
    border-radius: 2px;
}

.selarrow .arrow-tri {
    width: 7px;
    height: 4px;
}

.kml {
    display: flex;
    flex-direction: column;
    align-items: flex-end;
    width: 24px;
    font-family: "Liberation Sans", sans-serif;
    font-size: 10px;
    font-weight: 700;
    line-height: 12px;
    letter-spacing: -0.3px;
    color: #333;
}

.kml span {
    align-self: center;
}

.kml svg {
    width: 10px;
    height: 10px;
    margin-top: 3px;
    margin-right: 2px;
}

/* main area */
.main {
    display: flex;
    flex: 1;
    min-height: 0;
    margin-top: 1px;
    border-top: 1px solid #dcdcdc;
}

.dock {
    display: flex;
    flex: none;
    flex-direction: column;
    width: 272px;
    padding-right: 6px;
}

.panel-head {
    display: flex;
    align-items: center;
    justify-content: space-between;
    height: 20px;
    padding: 0 2px 0 4px;
}

.panel-btns {
    display: flex;
    gap: 3px;
}

.pbtn {
    display: flex;
    align-items: center;
    justify-content: center;
    width: 11px;
    height: 11px;
    font-family: "DejaVu Sans", sans-serif;
    font-style: normal;
    font-size: 9px;
    line-height: 11px;
    letter-spacing: 0;
    color: #333;
    border: 1px solid #999;
    border-radius: 2px;
}

.panel-tools {
    display: flex;
    align-items: center;
    gap: 7px;
    height: 30px;
    padding-left: 7px;
}

.browser .panel-tools {
    height: 28px;
    margin-bottom: 2px;
}

.pic {
    display: block;
    flex: none;
    width: 18px;
    height: 18px;
}

.eps {
    display: flex;
    flex: none;
    align-items: flex-end;
    width: 18px;
    height: 18px;
    font-family: "DejaVu Sans", sans-serif;
    font-size: 15px;
    line-height: 16px;
    color: #555;
}

.eps-ic {
    width: 8px;
    height: 10px;
}

.tree {
    background: #fff;
    border: 1px solid #a8a8a8;
}

.browser {
    flex: none;
    height: 154px;
}

.browser-tree {
    display: flex;
    height: 103px;
    overflow: hidden;
}

.tree-rows {
    flex: 1;
    padding-top: 1px;
}

.tree-row {
    display: flex;
    align-items: center;
    height: 18px;
    padding-left: 6px;
}

.twig {
    flex: none;
    width: 0;
    height: 0;
    margin-right: 12px;
    border-top: 4px solid transparent;
    border-bottom: 4px solid transparent;
    border-left: 5px solid #555;
}

.twig.none {
    border-left-color: transparent;
}

.twig.dark {
    border-left-color: #0c2a45;
}

.tic {
    flex: none;
    width: 16px;
    height: 16px;
    margin-right: 6px;
}

.scrollbar {
    display: flex;
    flex: none;
    flex-direction: column;
    width: 14px;
    background: #f0f0f0;
}

.sb-btn {
    display: flex;
    align-items: center;
    justify-content: center;
    flex: none;
    height: 14px;
    background: #f4f4f4;
}

.sb-top {
    height: 24px;
    background: #f6f6f6;
}

.sb-thumb {
    flex: 1;
    background: #cdcdcd;
}

.tri-up,
.tri-down {
    display: block;
    width: 7px;
    height: 4px;
    background: #444;
}

.tri-up {
    clip-path: polygon(50% 0, 100% 100%, 0 100%);
}

.tri-down {
    clip-path: polygon(0 0, 100% 0, 50% 100%);
}

.splitter {
    flex: none;
    height: 5px;
    margin: 0 122px;
    background: radial-gradient(circle, #bbb .7px, transparent 1px) center / 3px 3px repeat-x;
}

.layers {
    flex: none;
    height: 244px;
}

.layer-tree {
    height: 192px;
}

.layer-row {
    display: flex;
    align-items: center;
    height: 19px;
    padding-left: 9px;
    color: #fff;
    background: #0a78d8;
}

.layer-row .twig {
    margin-right: 9px;
}

.layer-check {
    display: flex;
    align-items: center;
    justify-content: center;
    flex: none;
    width: 14px;
    height: 14px;
    margin-right: 6px;
    font-family: "DejaVu Sans", sans-serif;
    font-size: 11px;
    color: #000;
    background: #fff;
}

.layer-sym {
    flex: none;
    width: 16px;
    height: 16px;
    margin-right: 6px;
}

.layer-name {
    text-decoration: underline;
}

.osm {
    display: flex;
    flex: 1;
    flex-direction: column;
    min-height: 0;
}

.osm-form {
    display: flex;
    flex-direction: column;
}

.osm-line {
    display: flex;
    align-items: center;
    height: 22px;
    margin-top: -1px;
}

.osm-label {
    width: 96px;
    padding-left: 7px;
    white-space: nowrap;
}

.field {
    display: flex;
    flex: none;
    align-items: center;
    padding-left: 3px;
    background: #fff;
    border: 1px solid #b8b8b8;
    border-radius: 2px;
}

.osm-input {
    width: 103px;
    height: 22px;
}

.pushbtn {
    display: flex;
    align-items: center;
    justify-content: center;
    flex: none;
    background: #f3f3f3;
    border: 1px solid #c2c2c2;
    border-radius: 3px;
}

.go {
    width: 26px;
    height: 19px;
    margin-left: 6px;
}

.extent {
    height: 20px;
    margin-top: 6px;
}

.check {
    display: flex;
    align-items: center;
    justify-content: center;
    flex: none;
    width: 14px;
    height: 14px;
    background: #fff;
    border: 1px solid #bdbdbd;
}

.extent .check {
    margin-left: 8px;
}

.extent-label {
    margin-left: 5px;
}

.back {
    width: 26px;
    height: 20px;
    margin-left: auto;
}

.result-table {
    flex: none;
    height: 342px;
    margin: 6px 0 0 8px;
    background: #fff;
    border: 1px solid #b4b4b4;
}

.table-head {
    display: flex;
    height: 18px;
}

.th {
    display: flex;
    align-items: center;
    justify-content: center;
    background: #f3f3f3;
    border-right: 1px solid #e2e2e2;
}

.th-name { width: 53px; }
.th-class { width: 50px; }
.th-infos { width: 49px; border-right: 0; }

.osm-actions {
    display: flex;
    align-items: center;
    height: 26px;
    margin-top: 3px;
    padding-left: 29px;
}

.dots {
    width: 26px;
    height: 20px;
    margin-right: 27px;
}

.iconbtn {
    width: 24px;
    height: 23px;
    margin-right: 27px;
}

.zoombtn {
    gap: 4px;
    width: 60px;
    height: 23px;
}

.zoom-ar {
    width: 19px;
    height: 12px;
}

/* map */
.canvas {
    flex: 1;
    margin-bottom: 1px;
    background: #fff;
    border: 1px solid #a0a0a0;
    border-right-width: 2px;
    overflow: hidden;
}

.map {
    display: block;
    width: 1648px;
    height: 851px;
    margin: -1px;
}

.stars {
    stroke: #d9503c;
    stroke-width: 1.1;
    filter: drop-shadow(5px 5px 4px rgba(30, 30, 30, .65));
}

.c-red { fill: #e62e2a; stroke: #dd2f2b; }
.c-rorange { fill: #f4602f; }
.c-orange { fill: #fb9a55; }
.c-lorange { fill: #fdb46f; }
.c-pale { fill: #fee8a4; }
.c-lgreen { fill: #c8e0a6; }
.c-green { fill: #9cc9a2; }
.c-teal { fill: #6ea4b6; }
.c-blue { fill: #3f7db4; }

/* status bar */
.statusbar {
    display: flex;
    flex: none;
    align-items: center;
    height: 28px;
    padding-left: 5px;
    background: #f0f0f0;
}

.locator {
    display: flex;
    flex: none;
    align-items: center;
    width: 198px;
    height: 22px;
    padding-left: 8px;
    color: #666;
    background: #fff;
    border: 1px solid #b8b8b8;
    border-radius: 2px;
}

.loc-ic {
    width: 14px;
    height: 14px;
    margin-right: 7px;
}

.status-right {
    display: flex;
    flex: none;
    align-items: center;
    margin-left: 882px;
    letter-spacing: -0.35px;
}

.st-label {
    flex: none;
    white-space: nowrap;
}

.st-ic {
    flex: none;
    width: 16px;
    height: 16px;
}

.st-coordl { width: 57px; }

.st-coord {
    width: 132px;
    height: 22px;
    white-space: nowrap;
}

.st-mouse {
    margin-left: 4px;
}

.st-scale {
    width: 30px;
    margin-left: 13px;
}

.st-combo {
    width: 80px;
    height: 22px;
}

.combo-arrow {
    display: flex;
    align-items: center;
    justify-content: center;
    width: 18px;
    height: 100%;
    margin-left: auto;
    border-left: 1px solid #ddd;
}

.st-lock {
    margin-left: 10px;
}

.st-mag {
    width: 49px;
    margin-left: 6px;
}

.st-spin {
    height: 22px;
}

.st-magv {
    width: 87px;
}

.st-rot {
    width: 51px;
    margin-left: 9px;
}

.st-rotv {
    width: 83px;
}

.spin {
    display: flex;
    flex-direction: column;
    align-items: center;
    justify-content: center;
    gap: 2px;
    width: 14px;
    height: 100%;
    margin-left: auto;
    border-left: 1px solid #ddd;
}

.st-check {
    margin-left: 7px;
    font-family: "DejaVu Sans", sans-serif;
    font-size: 11px;
    letter-spacing: 0;
}

.st-render {
    width: 36px;
    margin-left: 3px;
}

.st-globe {
    margin-left: 16px;
}

.st-epsg {
    width: 53px;
    margin-left: 4px;
}

.st-msg {
    margin-left: 20px;
}
```
